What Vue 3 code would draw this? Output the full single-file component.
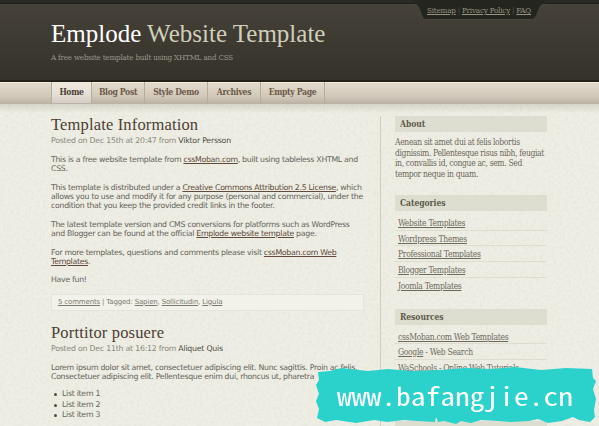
<script setup>
const tabs = [
  { label: 'Home', cls: 'home' },
  { label: 'Blog Post', cls: 'blog' },
  { label: 'Style Demo', cls: 'style' },
  { label: 'Archives', cls: 'arch' },
  { label: 'Empty Page', cls: 'empty' },
]
const categories = ['Website Templates', 'Wordpress Themes', 'Professional Templates', 'Blogger Templates', 'Joomla Templates']
const resources = [
  { link: 'cssMoban.com Web Templates', note: '' },
  { link: 'Google', note: ' - Web Search' },
  { link: 'WaSchools', note: ' - Online Web Tutorials' },
]
</script>

<template>
  <div class="page">
    <svg class="grain" width="599" height="322" aria-hidden="true">
      <filter id="paper" x="0" y="0" width="100%" height="100%">
        <feTurbulence type="fractalNoise" baseFrequency="0.35" numOctaves="3" seed="4" />
        <feColorMatrix values="0 0 0 0 0.5  0 0 0 0 0.49  0 0 0 0 0.4  0.3 0 0 0 -0.115" />
      </filter>
      <rect width="599" height="322" filter="url(#paper)" />
    </svg>

    <header class="header">
      <svg class="notch" width="132" height="20" viewBox="0 0 132 20" aria-hidden="true">
        <path d="M0 4 C5 4 5.500 7 7.500 12 C9 17 10 19.500 14 19.500 H118 C122 19.500 123 17 125 12 C127 7 127.500 4 132 4 V0 H0Z" fill="#24251f" />
        <path d="M0 4.500 C5 4.500 5.500 7 7.500 12 C9 17 10 19.500 14 19.500 H118 C122 19.500 123 17 125 12 C127 7 127.500 4.500 132 4.500" fill="none" stroke="#504d45" stroke-width="0.800" />
      </svg>
      <nav class="top-links"><a>Sitemap</a><i>|</i><a>Privacy Policy</a><i>|</i><a>FAQ</a></nav>
      <h1><b>Emplode</b> Website Template</h1>
      <p class="tagline">A free website template built using XHTML and CSS</p>
    </header>

    <nav class="tabs">
      <a v-for="t in tabs" :key="t.cls" :class="t.cls">{{ t.label }}</a>
    </nav>

    <div class="body">
      <main>
        <article>
          <h2>Template Information</h2>
          <div class="meta">Posted on Dec 15th at 20:47 from <b>Viktor Persson</b></div>
          <p>This is a free website template from <a>cssMoban.com</a>, built using tableless XHTML and<br>CSS.</p>
          <p>This template is distributed under a <a>Creative Commons Attribution 2.5 License</a>, which<br>allows you to use and modify it for any purpose (personal and commercial), under the<br>condition that you keep the provided credit links in the footer.</p>
          <p>The latest template version and CMS conversions for platforms such as WordPress<br>and Blogger can be found at the official <a>Emplode website template</a> page.</p>
          <p>For more templates, questions and comments please visit <a>cssMoban.com Web<br>Templates</a>.</p>
          <p>Have fun!</p>
          <div class="tags"><u>5 comments</u> | Tagged: <u>Sapien</u>, <u>Sollicitudin</u>, <u>Ligula</u></div>
        </article>
        <article>
          <h2>Porttitor posuere</h2>
          <div class="meta">Posted on Dec 11th at 16:12 from <b>Aliquet Quis</b></div>
          <p class="lorem">Lorem ipsum dolor sit amet, consectetuer adipiscing elit. Nunc sagittis. Proin ac felis.<br>Consectetuer adipiscing elit. Pellentesque enim dui, rhoncus ut, pharetra</p>
          <ul>
            <li v-for="n in 3" :key="n">List item {{ n }}</li>
          </ul>
        </article>
      </main>
      <aside>
        <h3>About</h3>
        <p class="about">Aenean sit amet dui at felis lobortis<br>dignissim. Pellentesque risus nibh, feugiat<br>in, convallis id, congue ac, sem. Sed<br>tempor neque in quam.</p>
        <h3>Categories</h3>
        <div class="links cats">
          <div v-for="c in categories" :key="c"><u>{{ c }}</u></div>
        </div>
        <h3>Resources</h3>
        <div class="links">
          <div v-for="r in resources" :key="r.link"><u>{{ r.link }}</u>{{ r.note }}</div>
        </div>
        <h3 class="last"></h3>
      </aside>
    </div>

    <div class="banner">
      <svg width="283" height="60" viewBox="0 0 283 60" aria-hidden="true">
        <path d="M2 5 L14 4 L25 1 L52 4 L72 2 L96 4 L123 3 L150 1 L174 2 L199 0 L225 3 L250 1 L276 2 L277 11 L280 14 L277 22 L280 32 L278 43 L279 50 L274 55 L263 53 L257 50 L246 54 L232 56 L222 52 L213 54 L195 55 L183 54 L165 53 L155 56 L145 54 L140 57 L128 54 L122 55 L120 50 L119 55 L101 54 L88 53 L71 55 L58 53 L40 56 L20 53 L9 55 L1 51 L3 42 L0 34 L3 27 L0 18 L3 13 Z" fill="#2bd2cb" />
      </svg>
      <span>www.bafangjie.cn</span>
    </div>
  </div>
</template>

<style>
body { margin: 0; overflow: hidden; }
</style>

<style scoped>
* { box-sizing: border-box; }
.page { position: relative; width: 599px; height: 426px; overflow: hidden; background: #efeee5; font-family: "DejaVu Sans", sans-serif; white-space: nowrap; }
.grain { position: absolute; left: 0; top: 104px; }
.header { position: relative; height: 82px; padding: 19px 0 0 51px; background: linear-gradient(#292a25 0 3px, #1e1f1a 3px 4px, #47443b 4px, #454138 6px, #35322b 80px, #24211b 80px); font-family: "Liberation Serif", serif; }
.notch { position: absolute; left: 413px; top: 0; }
.top-links { position: absolute; left: 427px; top: 6px; font: 8px/10px "DejaVu Serif Condensed", "DejaVu Serif", serif; letter-spacing: -.2px; color: #96937f; }
.top-links a { text-decoration: underline; }
.top-links i { font-style: normal; color: #55534a; margin: 0 2px; }
h1 { margin: 0; font-weight: 400; font-size: 25px; line-height: 29px; letter-spacing: 0; color: #d0cfba; }
h1 b { font-weight: 400; color: #fff; }
.tagline { margin: 5px 0 0; font: 8px/10px "DejaVu Serif Condensed", "DejaVu Serif", serif; letter-spacing: -.21px; color: #99968a; }
.tabs { display: flex; height: 22px; padding-left: 51px; background: linear-gradient(#f3ecdd 0 1px, #e3dacb 1px, #d3c9bb 14px, #bdb4a7 21px, #b9b2a3); font: bold 8.600px/20px "DejaVu Serif Condensed", "DejaVu Serif", serif; letter-spacing: -.35px; color: #6b5a49; }
.tabs a { text-align: center; border-right: 1px solid #b7ad9f; }
.home { width: 41px; border-left: 1px solid #b7ad9f; height: 21px; color: #4d3e35; background: linear-gradient(#f0e9dd, #e4dfd7 60%, #d5cdc5); }
.blog { width: 53px; }
.style { width: 63px; }
.arch { width: 53px; }
.empty { width: 64px; }
.body { position: relative; display: flex; height: 322px; padding: 12px 0 0 51px; background: linear-gradient(rgba(120, 120, 105, .2), rgba(120, 120, 105, 0) 9px); }
main { width: 330px; height: 310px; border-right: 1px solid #cfcec3; }
article { height: 207.500px; }
h2 { margin: 0; font: 400 16.500px/17px "Liberation Serif", serif; letter-spacing: .16px; color: #4c4034; }
.meta { margin: 3px 0 9px; font-size: 7.800px; line-height: 10px; letter-spacing: -.22px; color: #8a897d; }
.meta b { font-weight: 400; color: #4f4c44; }
main p { margin: 0 0 9.250px; font-size: 7.800px; line-height: 9.250px; letter-spacing: -.29px; color: #65635a; }
main p.lorem { letter-spacing: -.3px; }
main p a { color: #604a3c; text-decoration: underline; }
.tags { width: 313px; height: 17px; padding: 0 6px; border: 1px solid #e5e4da; background: #f3f2ea; font-size: 7px; line-height: 15px; letter-spacing: -.16px; color: #7b7a6e; }
ul { margin: -1px 0 0; padding: 0; list-style: none; font-size: 7.800px; line-height: 10.500px; letter-spacing: -.28px; color: #65635a; }
li { display: flex; align-items: center; }
li::before { content: ""; width: 3px; height: 3px; margin: 0 5px 0 3px; border-radius: 50%; background: #4f4c44; }
aside { width: 152px; margin-left: 14px; font-family: "DejaVu Serif Condensed", "DejaVu Serif", serif; color: #6d6a5c; }
h3 { margin: 0; height: 16px; padding-left: 5px; background: #dddecf; font: bold 8.500px/17px "DejaVu Serif Condensed", "DejaVu Serif", serif; letter-spacing: -.05px; color: #5d5a4c; }
.about { margin: 5px 0 16px; font-size: 8.500px; line-height: 10.500px; letter-spacing: -.36px; }
.links { padding-top: 4px; font-size: 8.500px; letter-spacing: -.32px; }
.links div { height: 15.650px; line-height: 16px; padding-left: 3px; border-bottom: 1px solid #deddd0; }
.links div:last-child { border: 0; }
.cats { height: 97.500px; }
.last { margin-top: 46px; }
.banner { position: absolute; left: 316px; top: 367px; }
.banner span { position: absolute; left: 21px; top: 12px; font: 29.500px/32px "Noto Sans Mono CJK SC", "DejaVu Sans Mono", monospace; color: #fff; transform: scaleY(.86); transform-origin: 0 50%; }
</style>
